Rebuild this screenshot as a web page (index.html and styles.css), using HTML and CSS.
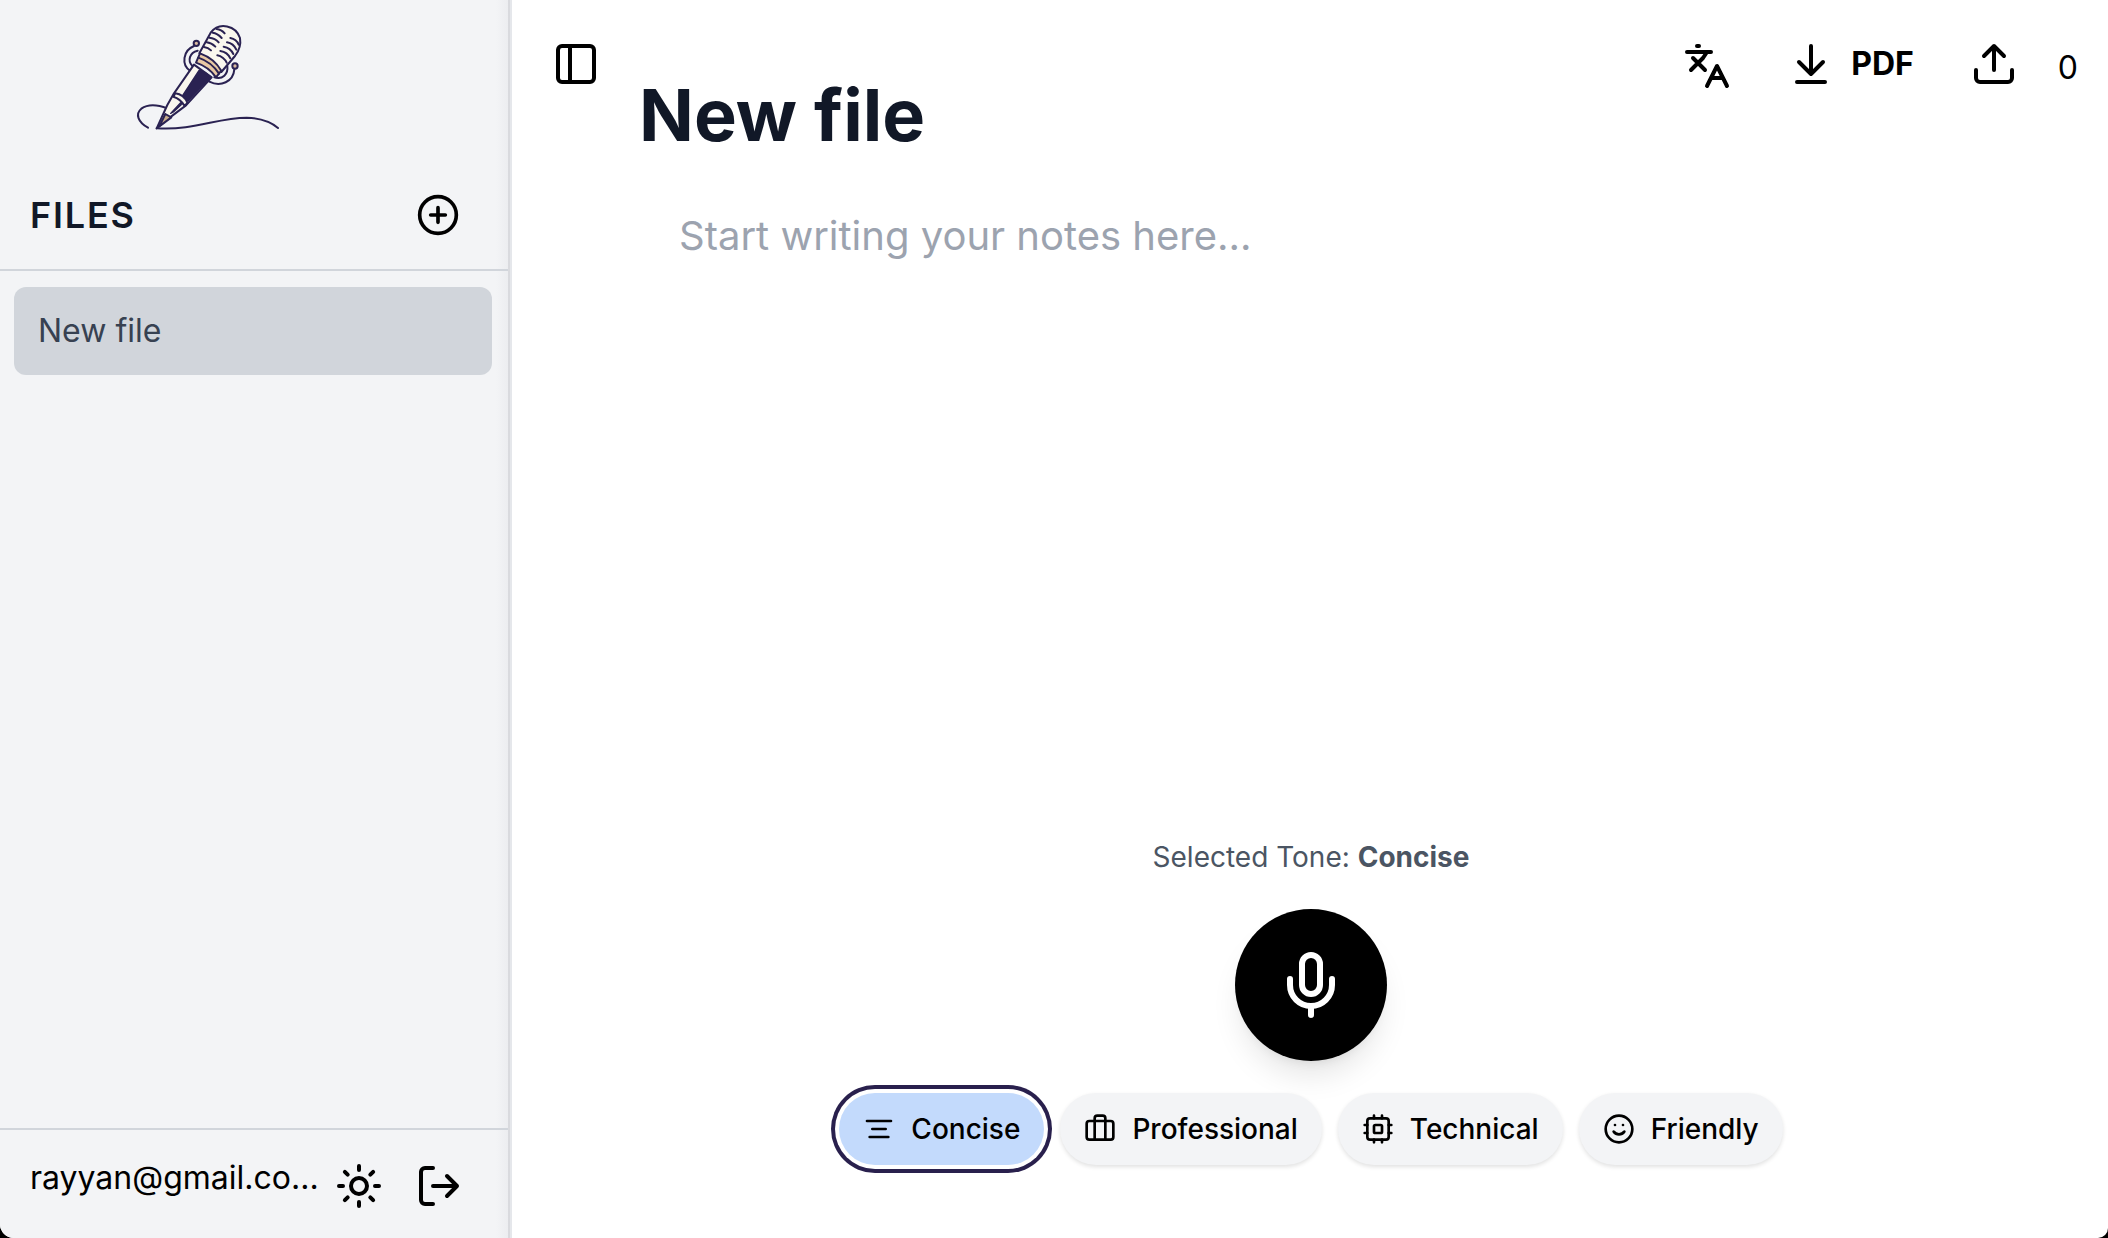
FILE: index.html
```html
<!DOCTYPE html>
<html lang="en">
<head>
<meta charset="utf-8">
<meta name="viewport" content="width=device-width, initial-scale=1">
<title>Voice notes</title>
<link rel="stylesheet" href="styles.css">
</head>
<body>
<div class="app">
  <aside class="sidebar">
    <div class="brand">
      <svg class="logo" viewBox="0 0 540 390" role="img" aria-label="Microphone pen logo">
        <g fill="none" stroke="#2a2252" stroke-width="6" stroke-linecap="round" stroke-linejoin="round">
          <path d="M84 353C54 336 45 312 64 296C86 280 116 285 142 295"/>
          <path d="M110 355C225 362 290 323 380 323C428 325 455 338 474 354"/>
          <path d="M222 108C188 122 184 164 210 182"/>
          <path d="M233 122C208 128 202 152 217 168"/>
          <path d="M343 178C340 215 302 232 268 215"/>
          <path d="M322 168C325 192 308 210 283 202"/>
          <circle cx="229" cy="100" r="8" fill="#d9b9a0"/>
          <circle cx="345" cy="168" r="8" fill="#d9b9a0"/>
        </g>
        <g stroke="#2a2252" stroke-width="6" stroke-linejoin="round" stroke-linecap="round">
          <path d="M238 130L272 68C298 34 348 47 360 84C364 108 356 124 345 138L304 186Z" fill="#faf7ee"/>
          <path d="M240 130C268 140 290 158 304 182L288 202C274 182 252 166 228 158Z" fill="#e9c9a4"/>
          <path d="M235 143C262 152 282 168 297 191" fill="none"/>
          <path d="M222 164L275 202L198 286L150 322L110 355L142 285L162 250Z" fill="#faf7ee"/>
          <path d="M238 182C252 184 262 192 270 202L204 272L188 258Z" fill="#2a2252"/>
          <path d="M166 250C182 252 196 264 202 278L194 288C186 274 174 264 160 260Z" fill="#faf7ee"/>
          <path d="M182 278L186 282L160 306L152 310Z" fill="#2a2252" stroke-width="4"/>
          <path d="M136 312L154 322L118 349Z" fill="#c8ad8c"/>
        </g>
        <g fill="none" stroke="#2a2252" stroke-width="6" stroke-linecap="round">
          <path d="M290 57C300 58 308 63 314 70M278 68C289 69 298 76 305 84M268 83C280 84 290 90 296 97M260 97C270 98 280 104 286 110M252 111C260 112 268 116 273 121"/>
          <path d="M331 84C342 86 352 94 356 104M321 97C334 99 344 108 349 119M311 110C324 112 335 121 340 132M301 123C314 125 326 134 331 145M292 136C304 138 316 148 320 158"/>
        </g>
      </svg>
    </div>
    <div class="files-head">
      <h2 class="files-title">FILES</h2>
      <button class="icon-btn" type="button" aria-label="New file">
        <svg class="icon icon-add" viewBox="0 0 24 24"><circle cx="12" cy="12" r="10"/><path d="M8 12h8M12 8v8"/></svg>
      </button>
    </div>
    <nav class="files" aria-label="Files">
      <a class="file" href="#new-file" aria-current="page">New file</a>
    </nav>
    <footer class="account">
      <span class="email">rayyan@gmail.co...</span>
      <div class="account-actions">
        <button class="icon-btn" type="button" aria-label="Light mode">
          <svg class="icon" viewBox="0 0 24 24"><circle cx="12" cy="12" r="4"/><path d="M12 2v2M12 20v2M4.930 4.930l1.410 1.410M17.660 17.660l1.410 1.410M2 12h2M20 12h2M6.340 17.660l-1.410 1.410M19.070 4.930l-1.410 1.410"/></svg>
        </button>
        <button class="icon-btn" type="button" aria-label="Log out">
          <svg class="icon" viewBox="0 0 24 24"><path d="M9 21H5a2 2 0 0 1-2-2V5a2 2 0 0 1 2-2h4M16 17l5-5-5-5M21 12H9"/></svg>
        </button>
      </div>
    </footer>
  </aside>

  <main class="main">
    <button class="icon-btn panel-toggle" type="button" aria-label="Toggle sidebar">
      <svg class="icon" viewBox="0 0 24 24"><rect x="3" y="3" width="18" height="18" rx="2"/><path d="M9 3v18"/></svg>
    </button>
    <section class="note">
      <h1 class="note-title">New file</h1>
      <textarea class="editor" aria-label="Notes" placeholder="Start writing your notes here..."></textarea>
    </section>
    <div class="toolbar">
      <button class="icon-btn translate" type="button" aria-label="Translate">
        <svg class="icon" viewBox="0 0 24 24"><path d="m5 8 6 6M4 14l6-6 2-3M2 5h12M7 2h1M22 22l-5-10-5 10M14 18h6"/></svg>
      </button>
      <button class="icon-btn pdf" type="button">
        <svg class="icon" viewBox="0 0 24 24"><path d="M12 17V3M6 11l6 6 6-6M19 21H5"/></svg>
        <span>PDF</span>
      </button>
      <button class="icon-btn upload" type="button" aria-label="Upload">
        <svg class="icon" viewBox="0 0 24 24"><path d="M21 15v4a2 2 0 0 1-2 2H5a2 2 0 0 1-2-2v-4M17 8l-5-5-5 5M12 3v12"/></svg>
      </button>
      <span class="count">0</span>
    </div>
    <section class="recorder">
      <p class="tone">Selected Tone: <strong>Concise</strong></p>
      <button class="mic" type="button" aria-label="Record">
        <svg class="icon icon-mic" viewBox="0 0 24 24"><rect x="9" y="2" width="6" height="13" rx="3"/><path d="M19 10v2a7 7 0 0 1-14 0v-2M12 19v3"/></svg>
      </button>
      <div class="tones">
        <button class="chip chip-active" type="button" aria-pressed="true">
          <svg class="icon icon-chip" viewBox="0 0 24 24"><path d="M21 6H3M17 12H7M19 18H5"/></svg>Concise
        </button>
        <button class="chip" type="button" aria-pressed="false">
          <svg class="icon icon-chip" viewBox="0 0 24 24"><path d="M16 20V4a2 2 0 0 0-2-2h-4a2 2 0 0 0-2 2v16"/><rect x="2" y="6" width="20" height="14" rx="2"/></svg>Professional
        </button>
        <button class="chip" type="button" aria-pressed="false">
          <svg class="icon icon-chip" viewBox="0 0 24 24"><rect x="4" y="4" width="16" height="16" rx="2"/><rect x="9" y="9" width="6" height="6" rx="1"/><path d="M15 2v2M15 20v2M2 15h2M2 9h2M20 15h2M20 9h2M9 2v2M9 20v2"/></svg>Technical
        </button>
        <button class="chip" type="button" aria-pressed="false">
          <svg class="icon icon-chip" viewBox="0 0 24 24"><circle cx="12" cy="12" r="10"/><path d="M8 14s1.500 2 4 2 4-2 4-2M9 9h.01M15 9h.01"/></svg>Friendly
        </button>
      </div>
    </section>
  </main>
</div>
</body>
</html>
```

FILE: styles.css
```css
* {
  box-sizing: border-box;
}

html {
  background: #000;
}

body {
  margin: 0;
  font-family: Inter, "Liberation Sans", sans-serif;
  font-size: 32px;
  line-height: 48px;
  color: #000;
}

h1,
h2,
p {
  margin: 0;
}

button,
textarea {
  font: inherit;
  color: inherit;
  border: 0;
  padding: 0;
  background: none;
}

button {
  cursor: pointer;
}

.app {
  display: grid;
  grid-template-columns: 512px 1fr;
  min-height: 100vh;
  background: #fff;
  border-radius: 0 0 10px 14px;
  overflow: hidden;
}

.icon {
  display: block;
  flex: none;
  width: 48px;
  height: 48px;
  fill: none;
  stroke: currentColor;
  stroke-width: 2;
  stroke-linecap: round;
  stroke-linejoin: round;
}

.icon-add {
  width: 44px;
  height: 44px;
}

.icon-mic {
  width: 72px;
  height: 72px;
}

.icon-chip {
  width: 32px;
  height: 32px;
}

.icon-btn {
  display: flex;
  align-items: center;
}

/* Sidebar */

.sidebar {
  display: flex;
  flex-direction: column;
  padding-right: 2px;
  background: linear-gradient(to left, #ebecef, #f3f4f6 14px);
  border-right: 2px solid #e5e7eb;
  box-shadow: inset -2px 0 #d9dade;
}

.brand {
  display: flex;
  padding: 10px 120px 0;
}

.logo {
  width: 180px;
  height: 130px;
}

.files-head {
  display: flex;
  align-items: center;
  justify-content: space-between;
  padding: 51px 48px 30px 30px;
  border-bottom: 2px solid #d1d5db;
}

.files-title {
  font-size: 36px;
  font-weight: 600;
  letter-spacing: 0.05em;
  color: #111827;
}

.files {
  flex: 1;
  padding: 16px 16px 16px 14px;
}

.file {
  display: block;
  padding: 20px 24px;
  border-radius: 12px;
  background: #d1d5db;
  color: #374151;
  text-decoration: none;
}

.account {
  display: flex;
  justify-content: space-between;
  padding: 24px 45px 28px 30px;
  border-top: 2px solid #d1d5db;
}

.account-actions {
  display: flex;
  gap: 32px;
  padding-top: 8px;
}

/* Main area */

.main {
  display: grid;
  grid-template-columns: auto 1fr auto;
  grid-template-rows: 1fr auto;
  align-items: start;
  padding: 40px 30px 73px 40px;
}

.note {
  align-self: stretch;
  display: flex;
  flex-direction: column;
  padding: 31px 0 0 39px;
}

.note-title {
  font-size: 72px;
  line-height: 88px;
  font-weight: 700;
  color: #111827;
}

.editor {
  flex: 1;
  margin-top: 47px;
  padding: 0 40px;
  font-size: 40px;
  line-height: 60px;
  color: #111827;
  outline: none;
  resize: none;
}

.editor::placeholder {
  color: #9ca3af;
  opacity: 1;
}

.toolbar {
  display: flex;
  align-items: flex-start;
}

.translate {
  padding-top: 2px;
  margin-right: 56px;
}

.pdf {
  gap: 16px;
  margin-right: 56px;
  font-weight: 700;
}

.upload {
  margin-right: 40px;
}

.count {
  padding-top: 4px;
}

.recorder {
  grid-column: 1 / -1;
  display: flex;
  flex-direction: column;
  align-items: center;
  padding-right: 8px;
}

.tone {
  font-size: 28px;
  line-height: 40px;
  color: #4b5563;
}

.mic {
  display: flex;
  align-items: center;
  justify-content: center;
  width: 152px;
  height: 152px;
  margin: 32px 0;
  border-radius: 50%;
  background: #000;
  color: #fff;
  box-shadow: 0 20px 30px -6px rgba(0, 0, 0, 0.1), 0 8px 12px -8px rgba(0, 0, 0, 0.1);
}

.tones {
  display: flex;
  flex-wrap: wrap;
  justify-content: center;
  gap: 16px;
}

.chip {
  display: flex;
  align-items: center;
  gap: 16px;
  padding: 16px 24px;
  border-radius: 36px;
  background: #f3f4f6;
  font-size: 28px;
  line-height: 40px;
  font-weight: 500;
  box-shadow: 0 2px 4px rgba(0, 0, 0, 0.12);
}

.chip-active {
  background: #c3dafc;
  box-shadow: 0 0 0 4px #fff, 0 0 0 8px #29204d;
}
```
